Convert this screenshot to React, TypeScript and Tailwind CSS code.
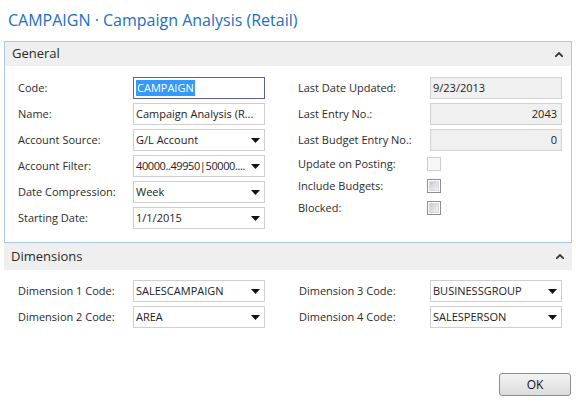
import React from 'react';

type FieldProps = {
  value: string;
  dropdown?: boolean;
  readOnly?: boolean;
  right?: boolean;
  focused?: boolean;
  tight?: boolean;
};

function Caret() {
  return (
    <svg width="9" height="5" viewBox="0 0 9 5" className="shrink-0 ml-1">
      <path d="M0 0h9L4.5 5z" fill="#111" />
    </svg>
  );
}

function Field({ value, dropdown, readOnly, right, focused, tight }: FieldProps) {
  const border = focused ? 'border-[#5d6196]' : readOnly ? 'border-[#d2d2d2]' : 'border-[#cfcfcf]';
  return (
    <div
      className={`h-[22px] w-[132px] border ${border} ${readOnly ? 'bg-[#f0f0f0]' : 'bg-white'} flex items-center pl-[2px] pr-[4px] ${right ? 'justify-end' : 'justify-between'}`}
    >
      {focused ? (
        <span className="bg-[#3399ff] text-white px-[1px] leading-[16px]">{value}</span>
      ) : (
        <span className={`whitespace-nowrap overflow-hidden text-[#222] ${tight ? 'tracking-[-0.4px]' : ''}`}>{value}</span>
      )}
      {dropdown && <Caret />}
    </div>
  );
}

function Row({ label, labelW, children, h = 'h-[26px]' }: { label: string; labelW: string; children: React.ReactNode; h?: string }) {
  return (
    <div className={`flex items-center ${h}`}>
      <div className={`${labelW} shrink-0 text-[#2b2b2b] whitespace-nowrap`}>{label}</div>
      {children}
    </div>
  );
}

function Check({ dim }: { dim?: boolean }) {
  if (dim) {
    return <div className="w-[14px] h-[14px] border border-[#cdcdcd] bg-[#f7f7f7]" />;
  }
  return (
    <div className="w-[14px] h-[14px] border border-[#8e8e8e] bg-white p-[1px]">
      <div className="w-full h-full bg-gradient-to-br from-[#c9cad2] to-[#f4f4f6] border border-[#d9d9de]" />
    </div>
  );
}

function SectionHeader({ title, h }: { title: string; h: string }) {
  return (
    <div className={`${h} bg-[#efefef] flex items-center justify-between pl-[7px] pr-[8px]`}>
      <span className="text-[13px] text-[#2a2a2a]">{title}</span>
      <svg width="8" height="5" viewBox="0 0 8 5">
        <path d="M0 5L4 1L8 5" stroke="#333" strokeWidth="1.8" fill="none" />
      </svg>
    </div>
  );
}

export default function App() {
  return (
    <div className="w-[576px] h-[402px] bg-white flex flex-col font-['Open_Sans','Noto_Sans',sans-serif] text-[11px] overflow-hidden">
      {/* Title */}
      <h1 className="pl-[8px] pt-[9px] text-[16px] leading-[22px] text-[#1b6fc5] whitespace-nowrap">
        CAMPAIGN · Campaign Analysis (Retail)
      </h1>

      {/* General */}
      <div className="mx-[4px] mt-[10px] border border-[#a9c9ee]">
        <SectionHeader title="General" h="h-[24px]" />
        <div className="flex pl-[13px] pt-[9px] pb-[11px]">
          <div className="flex flex-col">
            <Row label="Code:" labelW="w-[115px]">
              <Field value="CAMPAIGN" focused />
            </Row>
            <Row label="Name:" labelW="w-[115px]">
              <Field value="Campaign Analysis (R..." />
            </Row>
            <Row label="Account Source:" labelW="w-[115px]">
              <Field value="G/L Account" dropdown />
            </Row>
            <Row label="Account Filter:" labelW="w-[115px]">
              <Field value="40000..49950|50000...." dropdown tight />
            </Row>
            <Row label="Date Compression:" labelW="w-[115px]">
              <Field value="Week" dropdown />
            </Row>
            <Row label="Starting Date:" labelW="w-[115px]">
              <Field value="1/1/2015" dropdown />
            </Row>
          </div>
          <div className="flex flex-col ml-[33px]">
            <Row label="Last Date Updated:" labelW="w-[132px]">
              <Field value="9/23/2013" readOnly />
            </Row>
            <Row label="Last Entry No.:" labelW="w-[132px]">
              <Field value="2043" readOnly right />
            </Row>
            <Row label="Last Budget Entry No.:" labelW="w-[132px]">
              <Field value="0" readOnly right />
            </Row>
            <Row label="Update on Posting:" labelW="w-[129px]" h="h-[22px]">
              <Check dim />
            </Row>
            <Row label="Include Budgets:" labelW="w-[129px]" h="h-[22px]">
              <Check />
            </Row>
            <Row label="Blocked:" labelW="w-[129px]" h="h-[22px]">
              <Check />
            </Row>
          </div>
        </div>
      </div>

      {/* Dimensions */}
      <div className="mx-[4px]">
        <SectionHeader title="Dimensions" h="h-[27px]" />
        <div className="flex pl-[14px] pt-[8px]">
          <div className="flex flex-col">
            <Row label="Dimension 1 Code:" labelW="w-[115px]">
              <Field value="SALESCAMPAIGN" dropdown />
            </Row>
            <Row label="Dimension 2 Code:" labelW="w-[115px]">
              <Field value="AREA" dropdown />
            </Row>
          </div>
          <div className="flex flex-col ml-[34px]">
            <Row label="Dimension 3 Code:" labelW="w-[131px]">
              <Field value="BUSINESSGROUP" dropdown />
            </Row>
            <Row label="Dimension 4 Code:" labelW="w-[131px]">
              <Field value="SALESPERSON" dropdown />
            </Row>
          </div>
        </div>
      </div>

      {/* Footer button */}
      <div className="mt-auto flex justify-end pr-[5px] pb-[6px]">
        <button className="w-[72px] h-[23px] rounded-[3px] border border-[#8d8d8d] bg-gradient-to-b from-[#f3f3f3] to-[#dcdcdc] text-[12px] text-[#111] leading-none">
          OK
        </button>
      </div>
    </div>
  );
}
